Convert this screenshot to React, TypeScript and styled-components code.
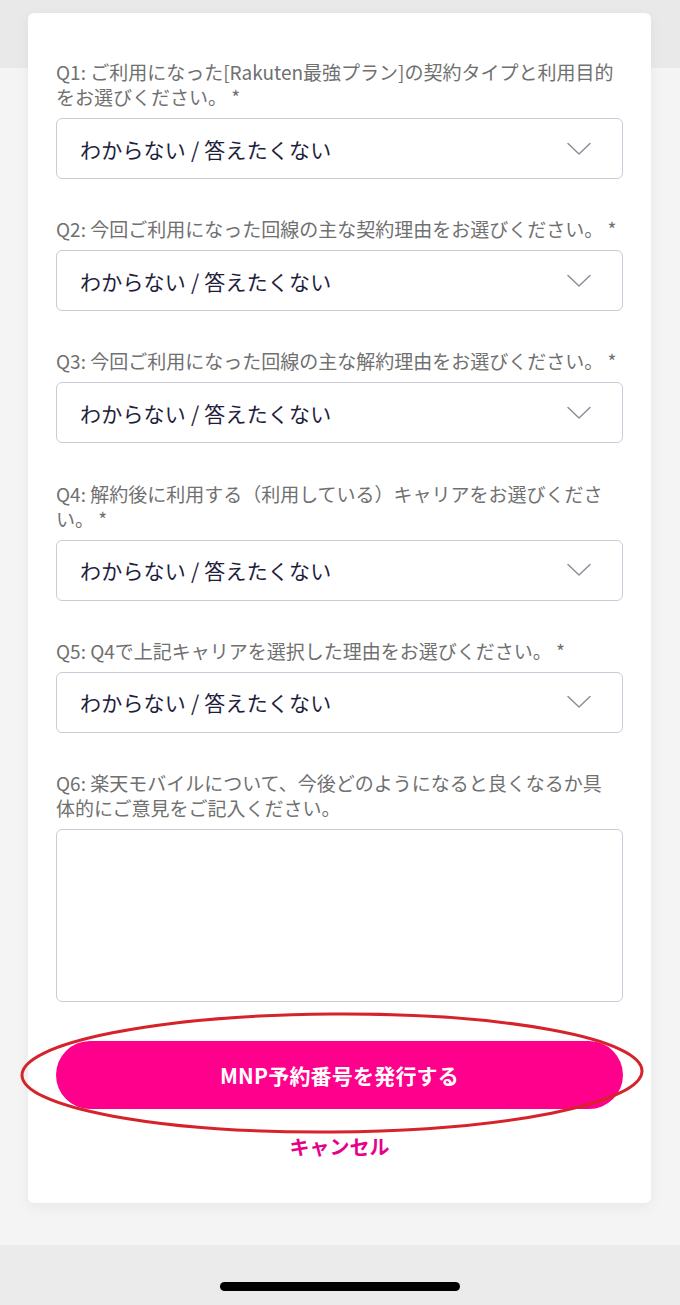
import React from "react";
import styled, { createGlobalStyle } from "styled-components";

const Global = createGlobalStyle`
  html, body { margin: 0; padding: 0; }
  body {
    background: #f4f4f4;
    font-family: "Noto Sans CJK JP", "Noto Sans", sans-serif;
  }
  * { box-sizing: border-box; }
`;

const Page = styled.div`
  width: 680px;
  min-height: 1305px;
  display: flex;
  flex-direction: column;
  background: linear-gradient(#e9e9e9 0, #e9e9e9 68px, #f4f4f4 68px);
`;

const Card = styled.main`
  margin: 13px 29px 0 28px;
  padding: 46px 28px 0 28px;
  height: 1190px;
  background: #ffffff;
  border-radius: 6px;
  box-shadow: 0 4px 14px rgba(0, 0, 0, 0.05);
  display: flex;
  flex-direction: column;
  gap: 37.2px;
`;

const Field = styled.div`
  display: flex;
  flex-direction: column;
  gap: 9px;
`;

const Label = styled.label`
  display: block;
  padding-right: 4px;
  font-size: 19px;
  line-height: 25px;
  color: #707070;
  word-break: break-all;
`;

const SelectBox = styled.div`
  height: 61px;
  border: 1.5px solid #cbcad8;
  border-radius: 6px;
  background: #fff;
  display: flex;
  align-items: center;
  justify-content: space-between;
  padding: 0 31px 0 23px;
`;

const SelectValue = styled.span`
  font-size: 21px;
  color: #1e1e3c;
  letter-spacing: 0.2px;
`;

const TextArea = styled.div`
  height: 173px;
  border: 1.5px solid #cbcad8;
  border-radius: 6px;
  background: #fff;
`;

const Actions = styled.div`
  margin-top: 2px;
  display: flex;
  flex-direction: column;
  align-items: center;
  gap: 25px;
`;

const ButtonWrap = styled.div`
  position: relative;
  width: 100%;
`;

const PrimaryButton = styled.button`
  width: 100%;
  height: 68px;
  border: none;
  border-radius: 34px;
  background: #ff008c;
  color: #ffffff;
  font-family: "Noto Sans CJK JP", sans-serif;
  font-weight: 700;
  font-size: 21px;
  letter-spacing: 0.2px;
  display: flex;
  align-items: center;
  justify-content: center;
`;

const Annotation = styled.svg`
  position: absolute;
  left: -36px;
  top: -29px;
  width: 624px;
  height: 124px;
  pointer-events: none;
  overflow: visible;
`;

const CancelLink = styled.a`
  font-size: 20px;
  font-weight: 700;
  color: #e6008a;
  line-height: 26px;
`;

const BottomSpacer = styled.div`
  flex: 1;
`;

const HomeBar = styled.div`
  height: 60px;
  background: #ebebeb;
  display: flex;
  justify-content: center;
  padding-top: 37px;
`;

const Indicator = styled.div`
  width: 240px;
  height: 9px;
  border-radius: 5px;
  background: #000;
`;

const Chevron = () => (
  <svg width="24" height="14" viewBox="0 0 24 14" fill="none">
    <path d="M1 1.5 L12 12 L23 1.5" stroke="#8e8e9c" strokeWidth="1.5" strokeLinecap="round" strokeLinejoin="round" />
  </svg>
);

const Select = ({ label, required }: { label: string; required?: boolean }) => (
  <Field>
    <Label>{required ? `${label} *` : label}</Label>
    <SelectBox>
      <SelectValue>わからない / 答えたくない</SelectValue>
      <Chevron />
    </SelectBox>
  </Field>
);

const questions = [
  "Q1: ご利用になった[Rakuten最強プラン]の契約タイプと利用目的をお選びください。",
  "Q2: 今回ご利用になった回線の主な契約理由をお選びください。",
  "Q3: 今回ご利用になった回線の主な解約理由をお選びください。",
  "Q4: 解約後に利用する（利用している）キャリアをお選びください。",
  "Q5: Q4で上記キャリアを選択した理由をお選びください。",
];

export default function App() {
  return (
    <>
      <Global />
      <Page>
        <Card>
          {questions.map((q) => (
            <Select key={q} label={q} required />
          ))}
          <Field>
            <Label>Q6: 楽天モバイルについて、今後どのようになると良くなるか具体的にご意見をご記入ください。</Label>
            <TextArea />
          </Field>
          <Actions>
            <ButtonWrap>
              <PrimaryButton>MNP予約番号を発行する</PrimaryButton>
              <Annotation viewBox="0 0 624 124">
                <ellipse cx="312" cy="61" rx="310" ry="59" fill="none" stroke="#d6232b" strokeWidth="3" transform="rotate(-0.4 312 61)" />
              </Annotation>
            </ButtonWrap>
            <CancelLink>キャンセル</CancelLink>
          </Actions>
        </Card>
        <BottomSpacer />
        <HomeBar>
          <Indicator />
        </HomeBar>
      </Page>
    </>
  );
}
